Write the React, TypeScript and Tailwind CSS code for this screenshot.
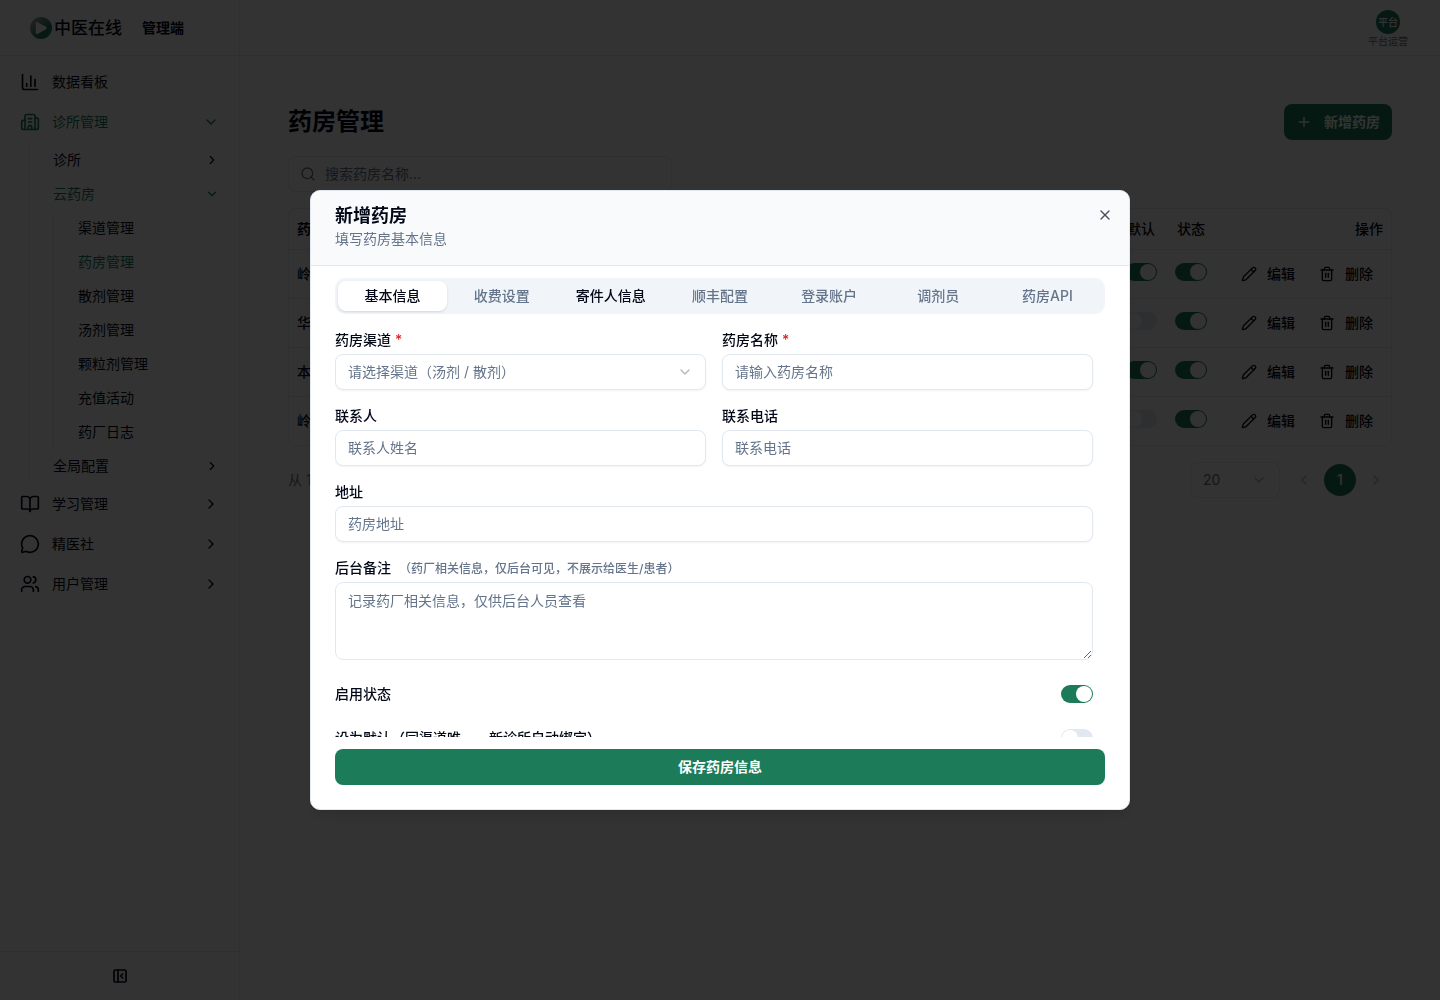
import type { ReactNode } from "react";
import {
  BookOpen,
  Building2,
  ChartColumn,
  ChevronDown,
  ChevronLeft,
  ChevronRight,
  MessageCircle,
  PanelLeftClose,
  Pencil,
  Plus,
  Search,
  Trash2,
  Users,
  X,
} from "lucide-react";

const pharmacies = [
  { name: "岭南药房", isDefault: true, enabled: true },
  { name: "华中药房", isDefault: false, enabled: true },
  { name: "本草药房", isDefault: true, enabled: true },
  { name: "岭南颗粒", isDefault: false, enabled: true },
];

const cloudItems = ["渠道管理", "药房管理", "散剂管理", "汤剂管理", "颗粒剂管理", "充值活动", "药厂日志"];

const tabs = ["基本信息", "收费设置", "寄件人信息", "顺丰配置", "登录账户", "调剂员", "药房API"];

function Switch({ label, id, on }: { label?: string; id?: string; on: boolean }) {
  return (
    <input
      type="checkbox"
      role="switch"
      id={id}
      aria-label={label}
      defaultChecked={on}
      className="inline-flex h-[18px] w-8 shrink-0 cursor-pointer appearance-none items-center rounded-full bg-[#e2e8f0] p-px before:size-4 before:rounded-full before:bg-white checked:justify-end checked:bg-[#1c7c5a]"
    />
  );
}

function Logo() {
  return (
    <svg viewBox="0 0 22 22" className="size-[22px]" aria-hidden="true">
      <defs>
        <linearGradient id="ring" x1="0" y1="0" x2="1" y2="1">
          <stop offset="0.15" stopColor="#a3a3a3" />
          <stop offset="0.65" stopColor="#1c7c5a" />
        </linearGradient>
      </defs>
      <circle cx="11" cy="11" r="11" fill="url(#ring)" />
      <path
        d="M7.2 5.2 16 9.8Q17.6 11 16 12.2L8 16.8Q5.8 17.8 5.8 15.4V6.2Q5.8 4.6 7.2 5.2Z"
        fill="#fff"
      />
    </svg>
  );
}

function NavItem({ icon, label, active, open }: { icon: ReactNode; label: string; active?: boolean; open?: boolean }) {
  return (
    <a
      href="#"
      className={
        active
          ? "flex h-10 items-center gap-3 px-5 text-[#1c7c5a]"
          : "flex h-10 items-center gap-3 px-5"
      }
    >
      {icon}
      <span className="flex-1">{label}</span>
      {open === true && <ChevronDown className="size-4" />}
      {open === false && <ChevronRight className="size-4" />}
    </a>
  );
}

function SubItem({ label, active, open }: { label: string; active?: boolean; open?: boolean }) {
  return (
    <a
      href="#"
      className={
        active
          ? "flex h-8 items-center justify-between pr-5 pl-6 text-[#1c7c5a]"
          : "flex h-8 items-center justify-between pr-5 pl-6"
      }
    >
      <span>{label}</span>
      {open === true && <ChevronDown className="size-3.5" />}
      {open === false && <ChevronRight className="size-3.5" />}
    </a>
  );
}

function Sidebar() {
  return (
    <aside className="flex w-60 shrink-0 flex-col border-r border-[#e2e8f0]">
      <div className="flex h-14 shrink-0 items-center border-b border-[#e2e8f0] pl-[30px]">
        <Logo />
        <span className="mt-0.5 ml-0.5 text-[17px] font-medium">中医在线</span>
        <span className="ml-5 text-sm font-bold">管理端</span>
      </div>
      <nav className="flex-1 pt-1.5 text-sm">
        <NavItem icon={<ChartColumn className="size-5" />} label="数据看板" />
        <NavItem icon={<Building2 className="size-5" />} label="诊所管理" active open />
        <div className="my-0.5 ml-7 flex flex-col gap-0.5 border-l border-[#e2e8f0]">
          <SubItem label="诊所" open={false} />
          <SubItem label="云药房" active open />
          <div className="ml-6 flex flex-col gap-0.5 border-l border-[#e2e8f0]">
            {cloudItems.map((item) => (
              <SubItem key={item} label={item} active={item === "药房管理"} />
            ))}
          </div>
          <SubItem label="全局配置" open={false} />
        </div>
        <NavItem icon={<BookOpen className="size-5" />} label="学习管理" open={false} />
        <NavItem icon={<MessageCircle className="size-5" />} label="精医社" open={false} />
        <NavItem icon={<Users className="size-5" />} label="用户管理" open={false} />
      </nav>
      <div className="flex justify-center border-t border-[#e2e8f0] py-2">
        <button type="button" aria-label="收起菜单" className="grid size-8 place-items-center">
          <PanelLeftClose className="size-4" strokeWidth={2.5} />
        </button>
      </div>
    </aside>
  );
}

function RowButton({ icon, label }: { icon: ReactNode; label: string }) {
  return (
    <button type="button" className="inline-flex h-8 items-center gap-2.5 px-2.5 font-medium">
      {icon}
      {label}
    </button>
  );
}

function PharmacyTable() {
  return (
    <div className="mt-4 overflow-hidden rounded-lg border border-[#e2e8f0]">
      <table className="w-full text-sm">
        <thead>
          <tr className="h-10 border-b border-[#e2e8f0]">
            <th className="px-2 text-left font-bold">药房名称</th>
            <th className="w-[50px] text-center font-medium">默认</th>
            <th className="w-[50px] text-center font-medium">状态</th>
            <th className="w-[175px] px-2 text-right font-medium">操作</th>
          </tr>
        </thead>
        <tbody>
          {pharmacies.map((row, i) => (
            <tr key={i} className="border-b border-[#e2e8f0] last:border-b-0">
              <td className="px-2 font-medium">{row.name}</td>
              <td className="text-center">
                <Switch label={`${row.name} 默认`} on={row.isDefault} />
              </td>
              <td className="text-center">
                <Switch label={`${row.name} 状态`} on={row.enabled} />
              </td>
              <td className="p-2">
                <div className="flex justify-end gap-1">
                  <RowButton icon={<Pencil className="size-4" />} label="编辑" />
                  <RowButton icon={<Trash2 className="size-4" />} label="删除" />
                </div>
              </td>
            </tr>
          ))}
        </tbody>
      </table>
    </div>
  );
}

function Pagination() {
  return (
    <div className="mt-4 flex items-center justify-between text-sm text-[#64748b]">
      <span>从 1 到 4，共 4 条</span>
      <div className="flex items-center gap-1">
        <div className="relative mr-1 w-[90px]">
          <select
            aria-label="每页条数"
            className="h-9 w-full appearance-none rounded-lg border border-[#e2e8f0] px-3 text-sm"
          >
            <option>20</option>
          </select>
          <ChevronDown className="pointer-events-none absolute top-2.5 right-[13px] size-4 opacity-50" />
        </div>
        <button type="button" aria-label="上一页" className="grid size-8 place-items-center opacity-50">
          <ChevronLeft className="size-4" />
        </button>
        <button type="button" className="grid size-8 place-items-center rounded-full bg-[#1c7c5a] font-medium text-white">
          1
        </button>
        <button type="button" aria-label="下一页" className="grid size-8 place-items-center opacity-50">
          <ChevronRight className="size-4" />
        </button>
      </div>
    </div>
  );
}

function Required() {
  return <span className="ml-1 text-[#dc2626]">*</span>;
}

const fieldClass =
  "block h-9 w-full rounded-lg border border-[#e2e8f0] bg-white px-3 pb-0.5 text-sm shadow-xs placeholder:text-[#64748b]";

function Field({ id, label, children }: { id: string; label: ReactNode; children: ReactNode }) {
  return (
    <div>
      <label htmlFor={id} className="mb-1 block h-5 text-sm font-medium">
        {label}
      </label>
      {children}
    </div>
  );
}

function PharmacyDialog() {
  return (
    <div className="fixed inset-0 z-10 grid place-items-center bg-black/80">
      <div
        role="dialog"
        aria-modal="true"
        aria-labelledby="dialog-title"
        className="relative flex h-[62vh] w-full max-w-[820px] flex-col overflow-hidden rounded-[10px] border border-[#e2e8f0] bg-white shadow-lg"
      >
        <header className="shrink-0 border-b border-[#e2e8f0] bg-[#f8fafc] px-6 py-4">
          <h2 id="dialog-title" className="text-lg leading-none font-semibold">
            新增药房
          </h2>
          <p className="mt-1 text-sm text-[#64748b]">填写药房基本信息</p>
        </header>
        <button type="button" aria-label="关闭" className="absolute top-4 right-4 opacity-70">
          <X className="size-4" />
        </button>

        <div className="flex min-h-0 flex-1 flex-col px-6 pt-3 pb-6">
          <div role="tablist" className="flex h-9 shrink-0 rounded-[10px] bg-[#f1f5f9] p-[3px] text-sm font-medium">
            {tabs.map((tab) => (
              <button
                key={tab}
                type="button"
                role="tab"
                aria-selected={tab === "基本信息"}
                className={
                  tab === "基本信息"
                    ? "flex-1 basis-0 rounded-lg bg-white shadow-sm"
                    : tab === "寄件人信息"
                      ? "flex-1 basis-0"
                      : "flex-1 basis-0 text-[#64748b]"
                }
              >
                {tab}
              </button>
            ))}
          </div>

          <form className="mt-4 min-h-0 flex-1 overflow-y-auto pr-3 [scrollbar-width:none]">
            <div className="grid grid-cols-2 gap-4">
              <Field id="channel" label={<>药房渠道<Required /></>}>
                <div className="relative">
                  <select
                    id="channel"
                    className="block h-9 w-full appearance-none rounded-lg border border-[#e2e8f0] bg-white px-3 text-sm text-[#64748b] shadow-xs"
                  >
                    <option>请选择渠道（汤剂 / 散剂）</option>
                  </select>
                  <ChevronDown className="pointer-events-none absolute top-2.5 right-[13px] size-4 text-[#64748b] opacity-50" />
                </div>
              </Field>
              <Field id="name" label={<>药房名称<Required /></>}>
                <input id="name" placeholder="请输入药房名称" className={fieldClass} />
              </Field>
              <Field id="contact" label="联系人">
                <input id="contact" placeholder="联系人姓名" className={fieldClass} />
              </Field>
              <Field id="phone" label="联系电话">
                <input id="phone" placeholder="联系电话" className={fieldClass} />
              </Field>
              <div className="col-span-2">
                <Field id="address" label="地址">
                  <input id="address" placeholder="药房地址" className={fieldClass} />
                </Field>
              </div>
              <div className="col-span-2">
                <Field
                  id="remark"
                  label={
                    <>
                      后台备注
                      <span className="ml-2 text-xs text-[#64748b]">（药厂相关信息，仅后台可见，不展示给医生/患者）</span>
                    </>
                  }
                >
                  <textarea
                    id="remark"
                    rows={3}
                    placeholder="记录药厂相关信息，仅供后台人员查看"
                    className="block w-full rounded-lg border border-[#e2e8f0] px-3 py-2 text-sm placeholder:text-[#64748b]"
                  />
                </Field>
              </div>
            </div>
            <div className="mt-4 flex flex-col gap-2 text-sm font-medium">
              <div className="flex items-center justify-between py-2">
                <label htmlFor="enabled">启用状态</label>
                <Switch id="enabled" on />
              </div>
              <div className="flex items-center justify-between py-2">
                <label htmlFor="default">设为默认（同渠道唯一，新诊所自动绑定）</label>
                <Switch id="default" on={false} />
              </div>
            </div>
          </form>

          <button type="button" className="mt-3 h-9 shrink-0 rounded-lg bg-[#1c7c5a] text-sm font-bold text-white">
            保存药房信息
          </button>
        </div>
      </div>
    </div>
  );
}

export default function App() {
  return (
    <div className="flex min-h-screen bg-white font-['Inter','Noto_Sans_CJK_SC',sans-serif] text-[#020817]">
      <Sidebar />
      <div className="flex min-w-0 flex-1 flex-col">
        <header className="flex h-14 shrink-0 items-end justify-end border-b border-[#e2e8f0] pr-8 pb-[7px]">
          <button type="button" className="flex flex-col items-center text-[10px] leading-[14px] text-[#64748b]">
            <span className="grid size-6 place-items-center rounded-full bg-[#1c7c5a] font-medium text-white">
              平台
            </span>
            平台运营
          </button>
        </header>
        <main className="p-12">
          <div className="flex items-center justify-between">
            <h1 className="text-2xl font-bold">药房管理</h1>
            <button
              type="button"
              className="flex h-9 items-center gap-3 rounded-lg bg-[#1c7c5a] px-3 text-sm font-bold text-white"
            >
              <Plus className="size-4" />
              新增药房
            </button>
          </div>
          <div className="relative mt-4 max-w-96">
            <Search className="absolute top-2.5 left-3 size-4 text-[#64748b]" />
            <input
              aria-label="搜索药房名称"
              placeholder="搜索药房名称..."
              className="block h-9 w-full rounded-lg border border-[#e2e8f0] pr-3 pb-0.5 pl-9 text-sm placeholder:text-[#64748b]"
            />
          </div>
          <PharmacyTable />
          <Pagination />
        </main>
      </div>
      <PharmacyDialog />
    </div>
  );
}
